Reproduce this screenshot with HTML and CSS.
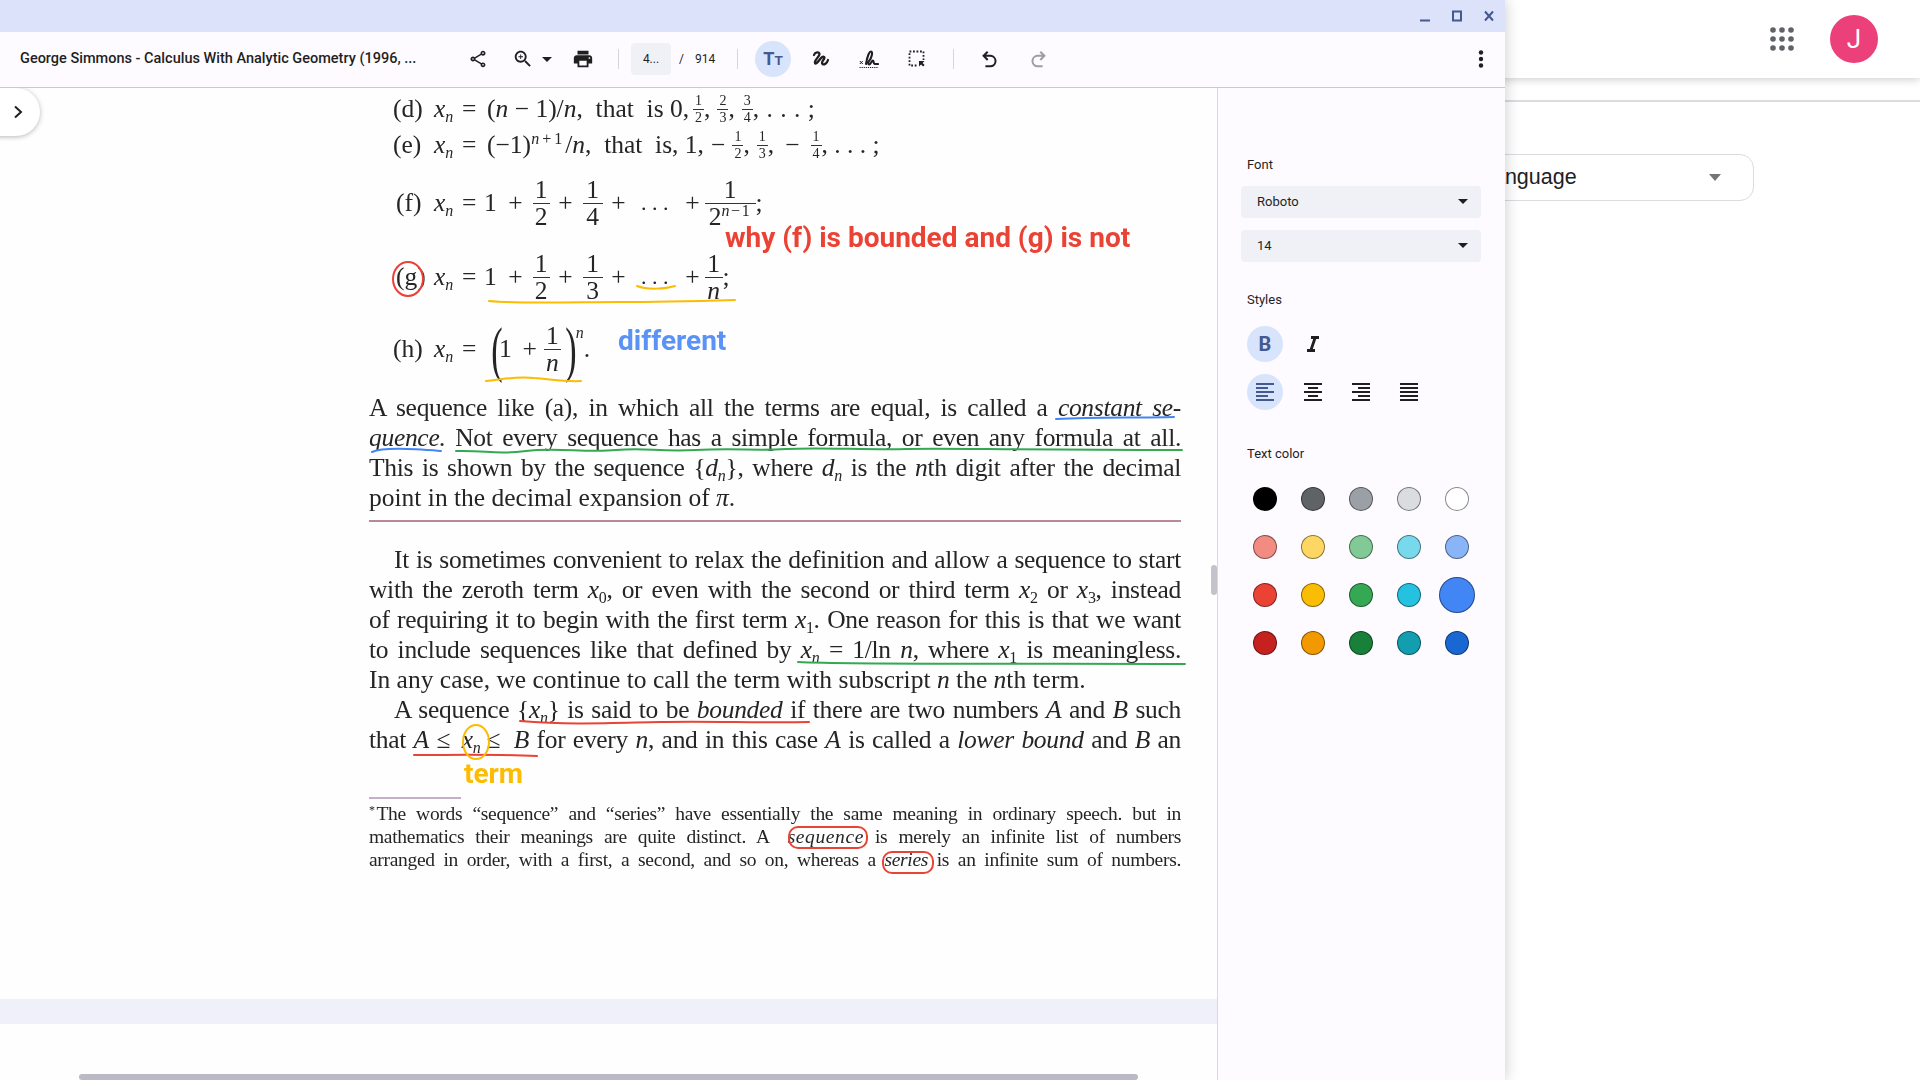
FILE: index.html
```html
<!DOCTYPE html>
<html lang="en">
<head>
  <meta charset="UTF-8" />
  <title>George Simmons - Calculus With Analytic Geometry</title>
  <link rel="stylesheet" href="styles.css">
</head>
<body>

  <!-- Page behind the viewer window -->
  <div class="site">
    <header class="site-header">
      <svg class="apps" width="24" height="24" viewBox="0 0 24 24"><g fill="#5f6368"><circle cx="3" cy="3" r="2.8"/><circle cx="12" cy="3" r="2.8"/><circle cx="21" cy="3" r="2.8"/><circle cx="3" cy="12" r="2.8"/><circle cx="12" cy="12" r="2.8"/><circle cx="21" cy="12" r="2.8"/><circle cx="3" cy="21" r="2.8"/><circle cx="12" cy="21" r="2.8"/><circle cx="21" cy="21" r="2.8"/></g></svg>
      <div class="avatar">J</div>
    </header>
    <div class="site-rule"></div>
    <div class="lang-select"><span>Language</span><i class="lang-caret"></i></div>
  </div>

  <div class="window">
    <div class="titlebar">
      <svg class="win-btn" width="12" height="12" viewBox="0 0 12 12"><path d="M1 10.5h10" stroke="#44598f" stroke-width="2"/></svg>
      <svg class="win-btn" width="12" height="12" viewBox="0 0 12 12"><rect x="2" y="1.500" width="8" height="9" fill="none" stroke="#44598f" stroke-width="2"/></svg>
      <svg class="win-btn" width="12" height="12" viewBox="0 0 12 12"><path d="M2 1.500l8 9M10 1.500l-8 9" stroke="#44598f" stroke-width="2"/></svg>
    </div>

    <div class="toolbar">
      <div class="doc-title">George Simmons - Calculus With Analytic Geometry (1996, ...</div>
      <button class="tool share-btn"><svg width="20" height="20" viewBox="0 0 24 24"><path fill="#1f1f1f" d="M18 16.08c-.76 0-1.44.3-1.96.77L8.91 12.7c.05-.23.09-.46.09-.7s-.04-.47-.09-.7l7.05-4.11c.54.5 1.25.81 2.04.81 1.66 0 3-1.34 3-3s-1.34-3-3-3-3 1.34-3 3c0 .24.04.47.09.7L8.04 9.81C7.5 9.31 6.79 9 6 9c-1.66 0-3 1.34-3 3s1.34 3 3 3c.79 0 1.5-.31 2.04-.81l7.12 4.16c-.05.21-.08.43-.08.65 0 1.61 1.31 2.92 2.92 2.92 1.61 0 2.92-1.31 2.92-2.92s-1.31-2.92-2.92-2.92zM18 4c.55 0 1 .45 1 1s-.45 1-1 1-1-.45-1-1 .45-1 1-1zM6 13c-.55 0-1-.45-1-1s.45-1 1-1 1 .45 1 1-.45 1-1 1zm12 7.02c-.55 0-1-.45-1-1s.45-1 1-1 1 .45 1 1-.45 1-1 1z"/></svg></button>
      <button class="tool zoom-btn"><svg width="22" height="22" viewBox="0 0 24 24"><path fill="#1f1f1f" d="M15.5 14h-.79l-.28-.27C15.41 12.59 16 11.11 16 9.5 16 5.91 13.09 3 9.5 3S3 5.91 3 9.5 5.91 16 9.5 16c1.61 0 3.09-.59 4.23-1.57l.27.28v.79l5 4.99L20.49 19l-4.99-5zm-6 0C7.01 14 5 11.99 5 9.5S7.01 5 9.5 5 14 7.01 14 9.5 11.99 14 9.5 14z"/><path fill="#1f1f1f" d="M12 10h-2v2H9v-2H7V9h2V7h1v2h2v1z"/></svg></button>
      <i class="caret caret-zoom"></i>
      <button class="tool print-btn"><svg width="22" height="22" viewBox="0 0 24 24"><path fill="#1f1f1f" d="M19 8H5c-1.66 0-3 1.34-3 3v6h4v4h12v-4h4v-6c0-1.66-1.34-3-3-3zm-3 11H8v-5h8v5zm3-7c-.55 0-1-.45-1-1s.45-1 1-1 1 .45 1 1-.45 1-1 1zm-1-9H6v4h12V3z"/></svg></button>
      <div class="sep sep-a"></div>
      <div class="page-box">4...</div>
      <span class="page-slash">/</span>
      <span class="page-total">914</span>
      <div class="sep sep-b"></div>
      <button class="tool tool-on text-tool"><span class="big-t">T</span><span class="small-t">T</span></button>
      <button class="tool"><svg width="20" height="20" viewBox="0 0 20 20"><path fill="none" stroke="#1f1f1f" stroke-width="2.3" stroke-linecap="round" stroke-linejoin="round" d="M3 6c1-3 5.500-3.500 5.500-1 0 3-5.500 6-4.500 9 .8 2 4-2.500 6-5 1.800-2 4.500-1.500 3 1-1.200 1.800-3 3.500-1.500 5 1.500 1.200 4.500-.5 5.500-4"/></svg></button>
      <button class="tool"><svg width="20" height="20" viewBox="0 0 20 20"><path fill="none" stroke="#1f1f1f" stroke-width="1" d="M.8 12l3 3M3.800 12l-3 3"/><path fill="none" stroke="#1f1f1f" stroke-width="2.100" stroke-linecap="round" stroke-linejoin="round" d="M7 15c1-6 3-12.500 5-12.500 2 0 1 6-2 9.500-1 1.500-1 3.500.2 3.500 1.800 0 2.300-4 3.800-4 1 0 .3 3.500 1.500 3.500H19"/><path stroke="#1f1f1f" stroke-width="1.200" stroke-dasharray="1.200 .9" d="M.5 18.500h19"/></svg></button>
      <button class="tool"><svg width="18" height="18" viewBox="0 0 18 18"><rect x="1.500" y="1.500" width="14" height="14" fill="none" stroke="#1f1f1f" stroke-width="1.800" stroke-dasharray="1.800 1.700"/><path fill="#fdfbff" d="M10 10h7v7h-7z"/><path fill="#1f1f1f" d="M11 11h5.500l-1.900 1.900 2 2-1.500 1.500-2-2L11 16.500z"/></svg></button>
      <div class="sep sep-c"></div>
      <button class="tool"><svg width="22" height="22" viewBox="0 0 24 24"><path fill="none" stroke="#1f1f1f" stroke-width="2.200" d="M9.500 4L5 8.500 9.500 13M5.500 8.500H13a5.800 5.800 0 0 1 0 11.500H7"/></svg></button>
      <button class="tool"><svg width="22" height="22" viewBox="0 0 24 24"><path fill="none" stroke="#9e9e9e" stroke-width="2.200" d="M14.500 4L19 8.500 14.500 13M18.500 8.500H11a5.800 5.800 0 0 0 0 11.500h6"/></svg></button>
      <button class="tool kebab"><svg width="24" height="24" viewBox="0 0 24 24"><g fill="#1f1f1f"><circle cx="12" cy="5.500" r="2.200"/><circle cx="12" cy="12" r="2.200"/><circle cx="12" cy="18.500" r="2.200"/></g></svg></button>
    </div>

    <div class="main">
      <div class="viewer">
        <div class="side-toggle"><svg width="12" height="14" viewBox="0 0 12 14"><path d="M3 1.500L9 7l-6 5.500" fill="none" stroke="#1f1f1f" stroke-width="2"/></svg></div>

        <div class="page">
          <div class="row row-d">
            <span class="lbl">(d)</span><span class="x"><i>x</i><sub>n</sub></span><span class="eq">=</span>
            <span class="t">(<i>n</i> − 1)/<i>n</i>,&nbsp;&nbsp;that&nbsp;&nbsp;is&nbsp;0,</span>
            <span class="frac mini m4"><span>1</span><b></b><span>2</span></span><span class="t">,</span>
            <span class="frac mini m7"><span>2</span><b></b><span>3</span></span><span class="t">,</span>
            <span class="frac mini m7"><span>3</span><b></b><span>4</span></span><span class="t dots">, . . . ;</span>
          </div>
          <div class="row row-e">
            <span class="lbl">(e)</span><span class="x"><i>x</i><sub>n</sub></span><span class="eq">=</span>
            <span class="t">(−1)<sup class="wide-sup"><i>n</i>+1</sup>/<i>n</i>,&nbsp;&nbsp;that&nbsp;&nbsp;is,&nbsp;1,</span>
            <span class="t m7">−</span>
            <span class="frac mini m7"><span>1</span><b></b><span>2</span></span><span class="t">,</span>
            <span class="frac mini m7"><span>1</span><b></b><span>3</span></span><span class="t">,</span>
            <span class="t m11">−</span>
            <span class="frac mini m11"><span>1</span><b></b><span>4</span></span><span class="t dots">, . . . ;</span>
          </div>
          <div class="row row-f">
            <span class="lbl lbl-n">(f)</span><span class="x"><i>x</i><sub>n</sub></span><span class="eq">=</span>
            <span class="t one">1</span><span class="op">+</span>
            <span class="frac"><span>1</span><b></b><span>2</span></span><span class="op">+</span>
            <span class="frac f4"><span>1</span><b></b><span>4</span></span><span class="op">+</span>
            <span class="t cdots">. . .</span><span class="op">+</span>
            <span class="frac wide"><span>1</span><b></b><span>2<sup><i>n</i>−1</sup></span></span><span class="t">;</span>
          </div>
          <div class="row row-g">
            <span class="lbl lbl-n">(g)</span><span class="x"><i>x</i><sub>n</sub></span><span class="eq">=</span>
            <span class="t one">1</span><span class="op">+</span>
            <span class="frac"><span>1</span><b></b><span>2</span></span><span class="op">+</span>
            <span class="frac f4"><span>1</span><b></b><span>3</span></span><span class="op">+</span>
            <span class="t cdots">. . .</span><span class="op">+</span>
            <span class="frac last-frac"><span>1</span><b></b><span><i>n</i></span></span><span class="t">;</span>
          </div>
          <div class="row row-h">
            <span class="lbl">(h)</span><span class="x"><i>x</i><sub>n</sub></span><span class="eq">=</span>
            <span class="paren">(</span><span class="t">1</span><span class="op">+</span>
            <span class="frac"><span>1</span><b></b><span><i>n</i></span></span><span class="paren">)</span>
            <span class="t sup-n"><i>n</i></span><span class="t">.</span>
          </div>

          <p class="para first">
            <span class="ln">A sequence like (a), in which all the terms are equal, is called a <i>constant se-</i></span>
            <span class="ln"><i>quence.</i> Not every sequence has a simple formula, or even any formula at all.</span>
            <span class="ln">This is shown by the sequence {<i>d</i><sub>n</sub>}, where <i>d</i><sub>n</sub> is the <i>n</i>th digit after the decimal</span>
            <span class="ln last">point in the decimal expansion of <i>π</i>.</span>
          </p>
          <div class="rule"></div>
          <p class="para">
            <span class="ln indent">It is sometimes convenient to relax the definition and allow a sequence to start</span>
            <span class="ln">with the zeroth term <i>x</i><sub class="up">0</sub>, or even with the second or third term <i>x</i><sub class="up">2</sub> or <i>x</i><sub class="up">3</sub>, instead</span>
            <span class="ln">of requiring it to begin with the first term <i>x</i><sub class="up">1</sub>. One reason for this is that we want</span>
            <span class="ln">to include sequences like that defined by <i>x</i><sub>n</sub> = 1/ln <i>n</i>, where <i>x</i><sub class="up">1</sub> is meaningless.</span>
            <span class="ln last">In any case, we continue to call the term with subscript <i>n</i> the <i>n</i>th term.</span>
            <span class="ln indent">A sequence {<i>x</i><sub>n</sub>} is said to be <i>bounded</i> if there are two numbers <i>A</i> and <i>B</i> such</span>
            <span class="ln">that <i>A</i> ≤ <span class="ringed"><i>x</i><sub>n</sub></span>≤ <i class="after-le">B</i> for every <i>n</i>, and in this case <i>A</i> is called a <i>lower bound</i> and <i>B</i> an</span>
          </p>
          <div class="rule-short"></div>
          <p class="para note">
            <span class="ln"><sup class="star">*</sup>The words “sequence” and “series” have essentially the same meaning in ordinary speech. but in</span>
            <span class="ln">mathematics their meanings are quite distinct. A <i class="ring-word">sequence</i> is merely an infinite list of numbers</span>
            <span class="ln">arranged in order, with a first, a second, and so on, whereas a <i>series</i> is an infinite sum of numbers.</span>
          </p>

          <!-- Hand drawn marks on top of the page -->
          <svg class="marks" width="1218" height="992" viewBox="0 88 1218 992" fill="none" stroke-width="2" stroke-linecap="round">
            <ellipse cx="408" cy="279" rx="15" ry="17" stroke="#ea4335"/>
            <path d="M489 301c30 3 90 1 130 1s80-1 116-2" stroke="#fbbc04"/>
            <path d="M637 286c10 4 28 3 38 0" stroke="#fbbc04"/>
            <path d="M486 381c14-1 28-5 48-3 16 1 30 4 47 3" stroke="#fbbc04"/>
            <path d="M1056 419c40-2 80-1 118-2" stroke="#4285f4"/>
            <path d="M372 452c12-5 40-3 69-1" stroke="#4285f4"/>
            <path d="M456 451c30-1 40 4 70 0s60 2 90-1 40 2 80 0 60 1 90-1 80 1 120 0 100 1 276 1" stroke="#34a853"/>
            <path d="M798 662c60 3 250 1 387 2" stroke="#34a853"/>
            <path d="M520 721c50 4 90 2 140 1s100 1 149 0" stroke="#ea4335"/>
            <path d="M414 755c40 0 80-1 123 1" stroke="#ea4335"/>
            <ellipse cx="476" cy="742" rx="13" ry="17" stroke="#fbbc04"/>
            <rect x="789" y="827" width="78" height="21" rx="9" stroke="#ea4335"/>
            <rect x="883" y="852" width="50" height="21" rx="9" stroke="#ea4335"/>
          </svg>
          <div class="note-text note-red">why (f) is bounded and (g) is not</div>
          <div class="note-text note-blue">different</div>
          <div class="note-text note-amber">term</div>
        </div>

        <div class="page-gap"></div>
        <div class="hscroll"></div>
        <div class="vscroll"></div>
      </div>

      <aside class="panel">
        <div class="label label-font">Font</div>
        <div class="select">Roboto<i class="caret"></i></div>
        <div class="select">14<i class="caret"></i></div>
        <div class="label label-styles">Styles</div>
        <div class="style-row">
          <button class="round on bold">B</button>
          <button class="round"><svg width="24" height="24" viewBox="0 0 24 24"><path fill="#1f1f1f" d="M10 4v3h2.210l-3.420 10H6v3h8v-3h-2.210l3.420-10H18V4z"/></svg></button>
        </div>
        <div class="style-row">
          <button class="round on"><svg width="24" height="24" viewBox="0 0 24 24"><path fill="#44598f" d="M15 15H3v2h12v-2zm0-8H3v2h12V7zM3 13h18v-2H3v2zm0 8h18v-2H3v2zM3 3v2h18V3H3z"/></svg></button>
          <button class="round"><svg width="24" height="24" viewBox="0 0 24 24"><path fill="#1f1f1f" d="M7 15v2h10v-2H7zm-4 6h18v-2H3v2zm0-8h18v-2H3v2zm4-6v2h10V7H7zM3 3v2h18V3H3z"/></svg></button>
          <button class="round"><svg width="24" height="24" viewBox="0 0 24 24"><path fill="#1f1f1f" d="M3 21h18v-2H3v2zm6-4h12v-2H9v2zm-6-4h18v-2H3v2zm6-4h12V7H9v2zM3 3v2h18V3H3z"/></svg></button>
          <button class="round"><svg width="24" height="24" viewBox="0 0 24 24"><path fill="#1f1f1f" d="M3 21h18v-2H3v2zm0-4h18v-2H3v2zm0-4h18v-2H3v2zm0-4h18V7H3v2zm0-6v2h18V3H3z"/></svg></button>
        </div>
        <div class="label label-color">Text color</div>
        <div class="swatches">
          <i class="sw c-black"></i><i class="sw c-g1"></i><i class="sw c-g2"></i><i class="sw c-g3"></i><i class="sw c-white"></i>
          <i class="sw c-r1"></i><i class="sw c-y1"></i><i class="sw c-n1"></i><i class="sw c-t1"></i><i class="sw c-b1"></i>
          <i class="sw c-r2"></i><i class="sw c-y2"></i><i class="sw c-n2"></i><i class="sw c-t2"></i><i class="sw c-b2 picked"></i>
          <i class="sw c-r3"></i><i class="sw c-y3"></i><i class="sw c-n3"></i><i class="sw c-t3"></i><i class="sw c-b3"></i>
        </div>
      </aside>
    </div>
  </div>

</body>
</html>
```

FILE: styles.css
```css
* {
  box-sizing: border-box;
}

html, body {
  margin: 0;
  height: 100%;
  overflow: hidden;
}

body {
  background: #fff;
  font-family: Roboto, Arial, sans-serif;
  color: #1f1f1f;
}

button {
  border: none;
  background: none;
  padding: 0;
  font: inherit;
}

/* Page behind the window */
.site-header {
  height: 78px;
  display: flex;
  justify-content: flex-end;
  align-items: center;
  padding-right: 42px;
  box-shadow: 0 2px 8px rgba(0, 0, 0, .18);
}

.apps {
  margin-right: 36px;
}

.avatar {
  width: 48px;
  height: 48px;
  border-radius: 50%;
  background: #ec407a;
  color: #fff;
  font-size: 26px;
  display: flex;
  align-items: center;
  justify-content: center;
}

.site-rule {
  height: 2px;
  margin-top: 22px;
  background: #dadce0;
}

.lang-select {
  width: 454px;
  height: 47px;
  margin: 52px 0 0 1300px;
  border: 1px solid #dadce0;
  border-radius: 14px;
  padding: 0 32px 0 180px;
  display: flex;
  align-items: center;
  justify-content: space-between;
  font-family: "Liberation Sans", Arial, sans-serif;
  font-size: 21.5px;
  color: #202124;
}

.lang-caret {
  border: 6px solid transparent;
  border-top: 7px solid #757575;
  border-bottom: none;
}

/* Viewer window */
.window {
  position: absolute;
  left: 0;
  top: 0;
  width: 1505px;
  height: 1080px;
  display: flex;
  flex-direction: column;
  box-shadow: 0 0 14px rgba(0, 0, 0, .22);
  background: #fefefe;
}

.titlebar {
  height: 32px;
  background: #dbe2fa;
  display: flex;
  justify-content: flex-end;
  align-items: center;
  gap: 20px;
  padding-right: 10px;
}

.toolbar {
  height: 56px;
  padding-bottom: 1px;
  background: #fdfbff;
  border-bottom: 1px solid #c9c9cf;
  display: flex;
  align-items: center;
}

.doc-title {
  width: 454px;
  padding-left: 20px;
  font-size: 14.5px;
  font-weight: 500;
  white-space: nowrap;
  margin-top: -1px;
}

.tool {
  width: 48px;
  height: 36px;
  display: flex;
  align-items: center;
  justify-content: center;
  flex: none;
}

.zoom-btn {
  width: 24px;
  margin-left: 9px;
}

.caret {
  width: 0;
  height: 0;
  border-left: 5px solid transparent;
  border-right: 5px solid transparent;
  border-top: 5px solid #1f1f1f;
}

.caret-zoom {
  margin: 0 19px 0 7px;
}

.print-btn {
  width: 24px;
}

.sep {
  width: 1px;
  height: 20px;
  background: #d4d4da;
}

.sep-a {
  margin-left: 23px;
}

.page-box {
  width: 40px;
  height: 32px;
  margin-left: 12px;
  background: #f0f1f7;
  border-radius: 4px;
  font-size: 12px;
  display: flex;
  align-items: center;
  justify-content: center;
}

.page-slash {
  font-size: 12px;
  margin-left: 8px;
  width: 4px;
}

.page-total {
  font-size: 12px;
  margin-left: 12px;
  width: 20px;
}

.sep-b {
  margin-left: 22px;
}

.text-tool {
  width: 36px;
  margin: 0 6px 0 17px;
  border-radius: 50%;
  background: #d8e3fc;
  color: #44598f;
  font-weight: 700;
  align-items: baseline;
  line-height: 36px;
}

.big-t {
  font-size: 18px;
}

.small-t {
  font-size: 13.5px;
}

.sep-c {
  margin: 0 12px;
}

.kebab {
  margin-left: auto;
}

/* Document area */
.main {
  flex: 1;
  display: flex;
  min-height: 0;
}

.viewer {
  position: relative;
  width: 1217px;
  background: #fefefe;
  overflow: hidden;
}

.side-toggle {
  position: absolute;
  left: -20px;
  top: 0;
  width: 60px;
  height: 48px;
  border-radius: 0 24px 24px 0;
  background: #fff;
  box-shadow: 0 1px 5px rgba(0, 0, 0, .28);
  display: flex;
  align-items: center;
  justify-content: flex-end;
  padding-right: 16px;
  z-index: 2;
}

.page {
  position: relative;
  height: 911px;
  padding: 3px 0 0 369px;
  font-family: "Liberation Serif", "Times New Roman", serif;
  font-size: 25.5px;
  color: #252525;
  filter: blur(.35px);
}

.row {
  display: flex;
  align-items: center;
  white-space: pre;
  width: 812px;
}

.row-d, .row-e {
  height: 36px;
}

.row-f {
  height: 80px;
}

.row-g {
  height: 68px;
}

.row-h {
  height: 76px;
}

.lbl {
  width: 41px;
  margin-left: 24px;
}

.lbl-n {
  width: 38px;
  margin-left: 27px;
}

.x {
  width: 28px;
}

sub {
  font-size: 16px;
  font-style: italic;
  line-height: 0;
  vertical-align: -5px;
}

sub.up {
  font-style: normal;
}

sup {
  font-size: 16px;
  line-height: 0;
  vertical-align: 9px;
  letter-spacing: 1.5px;
}

.wide-sup {
  letter-spacing: 3px;
}

.eq {
  width: 25px;
}

.one {
  width: 15.5px;
  margin-left: -3px;
}

.op {
  width: 16px;
  text-align: center;
  margin: 0 9px 0 8px;
}

.frac {
  display: inline-flex;
  flex-direction: column;
  align-items: center;
  width: 17px;
  line-height: 26px;
}

.frac b {
  width: 100%;
  height: 1px;
  background: #333;
}

.f4 {
  width: 20px;
}

.wide {
  width: 51px;
  margin-left: -5px;
}

.last-frac {
  width: 18px;
  margin-left: -5px;
}

.mini {
  width: 11px;
  font-size: 14px;
  line-height: 16px;
}

.m4 {
  margin-left: 4px;
}

.m7 {
  margin-left: 7px;
}

.m11 {
  margin-left: 11px;
}

.dots {
  word-spacing: 1px;
}

.row-e .dots {
  word-spacing: 0;
}

.cdots {
  width: 36px;
  font-size: 22px;
  margin: 0 -.5px 0 5.5px;
}

.paren {
  font-size: 62px;
  font-weight: 100;
  line-height: 60px;
  transform: scaleX(.55);
  width: 10px;
  margin-left: 2px;
}

.row-h .op {
  margin: 0 6px 0 10px;
}

.sup-n {
  font-size: 16px;
  margin: -32px 0 0 3px;
}

.para {
  margin: 0;
}

.first {
  margin-top: 6px;
}

.ln {
  display: block;
  height: 30px;
  line-height: 30px;
  text-align: justify;
  text-align-last: justify;
  width: 812px;
  letter-spacing: -.3px;
  word-spacing: -2px;
}

.last {
  text-align-last: left;
  letter-spacing: 0;
  word-spacing: 0;
}

.indent {
  padding-left: 25px;
}

.ringed {
  margin: 0 6px 0 4px;
}

.after-le {
  margin-left: 6px;
}

.ring-word {
  margin-left: 8px;
  letter-spacing: .6px;
}

.rule {
  height: 2px;
  width: 812px;
  margin: 7px 0 23px;
  background: #b98a96;
}

.rule-short {
  height: 2px;
  width: 92px;
  margin-top: 42px;
  background: #c4afc8;
}

.note {
  margin-top: 3px;
}

.note .ln {
  height: 23px;
  line-height: 23px;
  font-size: 19.5px;
}

.star {
  font-size: 12px;
  vertical-align: 6px;
}

.marks {
  position: absolute;
  left: 0;
  top: 0;
}

.note-text {
  position: absolute;
  font-family: Roboto, Arial, sans-serif;
  font-weight: 700;
  font-size: 28px;
  line-height: 30px;
  white-space: nowrap;
}

.note-red {
  left: 725px;
  top: 135px;
  color: #ea4335;
}

.note-blue {
  left: 618px;
  top: 238px;
  color: #5a93f5;
}

.note-amber {
  left: 464px;
  top: 671px;
  color: #fbbc04;
}

.page-gap {
  height: 25px;
  background: #f0f0fa;
}

.hscroll {
  position: absolute;
  left: 79px;
  right: 79px;
  bottom: 0;
  height: 6px;
  border-radius: 3px;
  background: #bbb9c4;
}

.vscroll {
  position: absolute;
  right: 0;
  top: 477px;
  width: 6px;
  height: 30px;
  border-radius: 3px;
  background: #c4c3cb;
}

/* Text options panel */
.panel {
  width: 288px;
  border-left: 1px solid #d9d9dd;
  background: #fdfbff;
  padding: 0 0 0 23px;
  font-size: 13px;
}

.label {
  padding-left: 6px;
  line-height: 16px;
}

.label-font {
  margin-top: 69px;
  margin-bottom: 13px;
}

.label-styles {
  margin-top: 30px;
  margin-bottom: 18px;
}

.label-color {
  margin-top: 36px;
  margin-bottom: 13px;
}

.select {
  width: 240px;
  height: 32px;
  margin-bottom: 12px;
  padding: 0 13px 1px 16px;
  background: #f0f1f6;
  border-radius: 4px;
  display: flex;
  align-items: center;
  justify-content: space-between;
}

.style-row {
  display: flex;
  gap: 12px;
  margin: 0 0 12px 6px;
}

.round {
  width: 36px;
  height: 36px;
  border-radius: 50%;
  display: flex;
  align-items: center;
  justify-content: center;
}

.round.on {
  background: #d8e3fc;
}

.bold {
  color: #44598f;
  font-size: 20px;
  font-weight: 700;
}

.swatches {
  display: grid;
  grid-template-columns: repeat(5, 48px);
  grid-auto-rows: 48px;
  place-items: center;
}

.sw {
  width: 24px;
  height: 24px;
  border-radius: 50%;
  border: 1px solid rgba(0, 0, 0, .45);
}

.sw.picked {
  width: 36px;
  height: 36px;
}

.c-black { background: #000; }
.c-g1 { background: #5f6368; }
.c-g2 { background: #9aa0a6; }
.c-g3 { background: #dadce0; }
.c-white { background: #fff; }
.c-r1 { background: #f28b82; }
.c-y1 { background: #fdd663; }
.c-n1 { background: #81c995; }
.c-t1 { background: #78d9ec; }
.c-b1 { background: #8ab4f8; }
.c-r2 { background: #ea4335; }
.c-y2 { background: #fbbc04; }
.c-n2 { background: #34a853; }
.c-t2 { background: #24c1e0; }
.c-b2 { background: #4285f4; }
.c-r3 { background: #c5221f; }
.c-y3 { background: #f29900; }
.c-n3 { background: #188038; }
.c-t3 { background: #129eaf; }
.c-b3 { background: #1967d2; }
```
